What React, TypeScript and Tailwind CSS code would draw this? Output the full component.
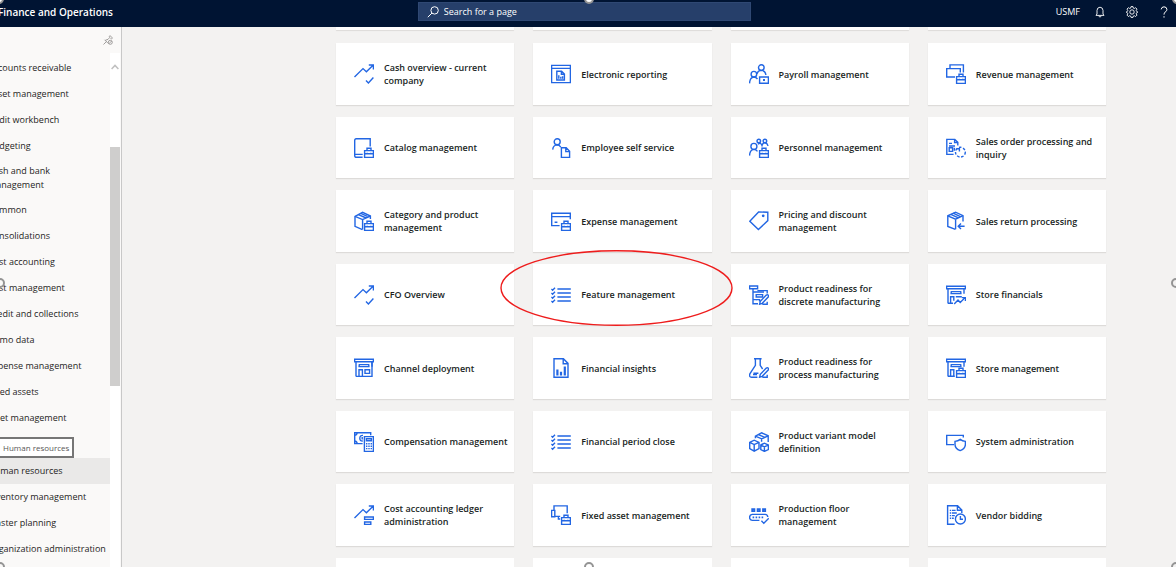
import type { ReactNode } from "react";

const NAV_ITEMS = [
  "Accounts receivable",
  "Asset management",
  "Audit workbench",
  "Budgeting",
  "Cash and bank management",
  "Common",
  "Consolidations",
  "Cost accounting",
  "Cost management",
  "Credit and collections",
  "Demo data",
  "Expense management",
  "Fixed assets",
  "Fleet management",
  "Human resources",
  "Inventory management",
  "Master planning",
  "Organization administration",
];

const ACTIVE_ITEM = "Human resources";

// Parts shared by several workspace icons, all on a 20x20 grid.

const briefcase = (
  <path d="M10.6 12.6h8.8v6.8h-8.8zM13 12.4v-2.2h4v2.2M10.6 15.8h8.8M13.2 14.8v1.8M16.8 14.8v1.8" />
);

const pencil = <path d="M10.6 19.2l.7-2.9 6-6.2q1.1-.8 1.9 0 .8.9 0 2l-6 6.2zM13.4 19.3h4.8v-2.6" />;

const trend = <path d="M.5 13L9 4.6l3.4 3.2L19.3 1M14.8 1h4.6v4.6" />;

const checklist = (
  <>
    <path d="M6.4 4h13.4M6.4 8h13.4M6.4 12h13.4M6.4 16h13.4" />
    <path d="M.4 4l1.2 1.2L4 2.8M.4 8l1.2 1.2L4 6.8M.4 12l1.2 1.2L4 10.8M.4 16l1.2 1.2L4 14.8" />
  </>
);

const storeTop = (
  <>
    <path d="M.6 1.2h18.8v2.6H.6zM2 3.8v14.6M18 3.8v5" />
    <path d="M4.4 8.6h11.2M5.2 6.2v2.4M14.8 6.2v2.4M5 6.6h10" />
  </>
);

const ICONS: Record<string, ReactNode> = {
  cash: (
    <>
      {trend}
      <path d="M12 16.6l2.4 2.4 5-5.4" />
    </>
  ),
  catalog: (
    <>
      <path d="M16.2 8.6V.8H2.2Q.7.8.7 2.4v15q0 1.9 1.9 1.9h6M.7 16.4h8" />
      {briefcase}
    </>
  ),
  category: (
    <>
      <path d="M8.4 18.6L1 15.4V5.4L8.6 1.4l7.8 3.6v3" />
      <path d="M1 5.4l7.6 3.2L16.4 5M8.6 8.6v10M4.4 3.6l7.8 3.4M6.8 2.4l6.6 3" />
      {briefcase}
    </>
  ),
  channel: (
    <>
      {storeTop}
      <path d="M18 3.8v14.6H2M5 18.2v-6.4h3.4v6.4M11 11.8h4.6v3.6H11z" />
    </>
  ),
  compensation: (
    <>
      <path d="M8.6 11.6H.7V.8h16v2.4M.7 3.4Q3 3.2 3.2.8M.7 9q2.3.2 2.5 2.6M9 3.4Q5.8 3.2 5.8 6.2T8.8 9M8.2 5v2.4" />
      <path d="M10.4 4.6h9v14.8h-9zM12.4 6.8h5v2h-5z" />
      <path strokeDasharray="1.4 .9" d="M12 11.8h6M12 14.2h6M12 16.6h6" />
    </>
  ),
  ledger: (
    <>
      {trend}
      <path d="M10.6 12h8.8v2.4h-8.8zM10.6 17h6.2v2.4h-6.2z" />
    </>
  ),
  reporting: (
    <>
      <path d="M.6 1.4h18.8v17.2H.6zM.6 4.4h18.8" />
      <path d="M5.8 7.2h4.8l2.8 2.8v6H5.8zM10.4 7.4v2.8h2.8M7.8 14.8v-3.6M9.8 14.8v-2M11.6 14.8v-2.6" />
    </>
  ),
  employee: (
    <>
      <circle cx="6.2" cy="3.8" r="3" />
      <path d="M1.7 11.6Q2.2 7 6.2 6.9q2 0 3.6 2.2" />
      <path d="M10.4 9.8h4.8l3.4 3.4v6.2h-8.2zM14.8 9.8v3.8h3.8" />
    </>
  ),
  expense: (
    <>
      <path d="M8.6 14.6H.7V2.2h18.6v6M.7 5.6h18.6M3.6 11.2h2.8" />
      {briefcase}
    </>
  ),
  checklist,
  insights: (
    <>
      <path d="M3 .7h9.4L17 5.4v13.9H3zM12.2.9v4.8H17" />
      <path strokeWidth="2.2" d="M6.4 17.4v-6M10 17.4v-3.6M13.8 17.4V8.6" />
    </>
  ),
  fixedAsset: (
    <>
      <path d="M3 5V.9h13.2v7.4M.6 5.4h3.2v6.4H.6zM3.8 11.4h5.4M7.4 11.6v2.4h1.8" />
      {briefcase}
    </>
  ),
  payroll: (
    <>
      <circle cx="12.3" cy="3.6" r="2.8" />
      <circle cx="4.9" cy="10.2" r="2.8" />
      <path d="M8 9.8q.8-3.2 4.3-3.4 4 .2 4.6 4.6M.5 19.4q.4-6 4.4-6.4 2 0 3.6 2" />
      <path d="M10.6 13h8.8v6.2h-8.8z" />
      <path strokeWidth="2" d="M14 16.1h2" />
    </>
  ),
  personnel: (
    <>
      <circle cx="4.9" cy="8.4" r="3" />
      <circle cx="9.8" cy="3" r="1.8" />
      <circle cx="15.9" cy="3" r="1.8" />
      <path d="M.5 17.6q.4-5.8 4.4-6.2 2 0 3.6 2M9 6.2q2.6-2.4 4 1.2 1.2-3.4 3.6-2.4 2 .6 2.4 3" />
      {briefcase}
    </>
  ),
  tag: (
    <>
      <path d="M.8 10.2L9.6.9l9.2.3v8.4l-9.4 9z" />
      <circle cx="14.2" cy="4.8" r=".7" />
    </>
  ),
  discrete: (
    <>
      <path d="M.6 1h8v2.8h-8zM4 3.8v15h5M4 7h11M4 14.6h4" />
      <path d="M8.4 5.6h9.8v3M7.2 9.6h6.4v2.4H7.2zM7.2 14.6h3.4v2" />
      {pencil}
    </>
  ),
  process: (
    <>
      <path d="M5 .7h7.6M6.4.9v6.5L1 15.6q-1.4 3.4 1.6 3.7h5.8M11.2.9v6.5l2.4 3.6" />
      <path d="M4.4 15.2h5M4 16.6h4" />
      {pencil}
    </>
  ),
  variant: (
    <>
      <path d="M6.4 6.2v-2L12.6.8l6.6 3V10M6.4 4.2l6.2 2.6 6.6-3M12.6 6.8v3M9.4 2.6l6.4 2.8" />
      <path d="M.7 10.4l4.5-2.2 4.8 2.2v6.2l-4.8 2.6-4.5-2.6zM.7 10.4l4.5 2.2 4.8-2.2M5.2 12.6v6.4" />
      <path d="M11.8 13l3.6-1.8 4 1.8v4.6l-4 1.8-3.6-1.8zM11.8 13l3.6 1.8 4-1.8M15.4 14.8v4.6" />
    </>
  ),
  floor: (
    <>
      <path strokeWidth="1.8" d="M3.2 4.2h2.2v2H3.2zM8.6 4.2h2.2v2H8.6zM14 4.2h2.2v2H14z" />
      <path d="M10.4 15.4H3.2q-2.6-.4-2.6-3t2.6-3h13q2.4.2 2.6 2.6" />
      <path strokeWidth="1.6" strokeDasharray="1.6 1.4" d="M3.6 12.4h12" />
      <path d="M12.4 15.8l2.4 2.4 5-5" />
    </>
  ),
  revenue: (
    <>
      <path d="M9 13H.7V4.6h13.6v3.8M4 4.4V.9h13.4v7.5" />
      {briefcase}
    </>
  ),
  salesOrder: (
    <>
      <path d="M7.6 16.4H.8v-15h8l3 3v3M8.6 1.6v3h3M3 5.4h3M3 8h6M3.2 13.4V9.8h3.4v3.6zM8.4 9.8v3" />
      <circle cx="14.4" cy="14.2" r="4.9" strokeDasharray="2.6 1.6" />
      <path d="M10.4 10.8h3v2.8" />
    </>
  ),
  salesReturn: (
    <>
      <path d="M9.4 18.4l-7.6-3V4.8l7.8-3.6L17 4.6v6" />
      <path d="M1.800 4.800l7.800 3.400L17 4.600M9.600 8.200v10M4.800 3.400l7.600 3.400M7.200 2.200l7.200 3.400M18.600 15.200h-6.400M15 12.400l-2.800 2.800 2.800 2.800" />
    </>
  ),
  storeFinancials: (
    <>
      {storeTop}
      <path d="M2 18.2h5M4.6 18.2v-6.4h3.2v4M9.800 11.800h6" />
      <path d="M8.2 19l3.8-4 2.2 2.4 5-4.8M15.8 12.6h3.6V16" />
    </>
  ),
  storeManagement: (
    <>
      {storeTop}
      <path d="M2 18.2h6.8M4.6 18.2v-6.4h3.2v6.4" />
      {briefcase}
    </>
  ),
  system: (
    <>
      <path d="M8 12.6H.7V3.4h16.6v2" />
      <path d="M14.2 7.4q2.2 1.8 5.2 2v3.2q-.2 4.200-5.200 6-5-1.800-5.200-6V9.400q3-.2 5.200-2z" />
    </>
  ),
  vendor: (
    <>
      <path d="M8.6 19.2h-7V.8h10L15.800 5v3M11.400 1v4.200h4.200" />
      <path strokeDasharray="1.2 .8 12" d="M3.800 5.400h5.800M3.800 8h7M3.800 10.600h5M3.800 13.200h4" />
      <circle cx="14.4" cy="14" r="5" />
      <path d="M14.4 11v3.200H17" />
    </>
  ),
};

interface Workspace {
  title: string;
  icon: string;
}

const WORKSPACES: Workspace[] = [
  { title: "Cash overview - current company", icon: "cash" },
  { title: "Electronic reporting", icon: "reporting" },
  { title: "Payroll management", icon: "payroll" },
  { title: "Revenue management", icon: "revenue" },
  { title: "Catalog management", icon: "catalog" },
  { title: "Employee self service", icon: "employee" },
  { title: "Personnel management", icon: "personnel" },
  { title: "Sales order processing and inquiry", icon: "salesOrder" },
  { title: "Category and product management", icon: "category" },
  { title: "Expense management", icon: "expense" },
  { title: "Pricing and discount management", icon: "tag" },
  { title: "Sales return processing", icon: "salesReturn" },
  { title: "CFO Overview", icon: "cash" },
  { title: "Feature management", icon: "checklist" },
  { title: "Product readiness for discrete manufacturing", icon: "discrete" },
  { title: "Store financials", icon: "storeFinancials" },
  { title: "Channel deployment", icon: "channel" },
  { title: "Financial insights", icon: "insights" },
  { title: "Product readiness for process manufacturing", icon: "process" },
  { title: "Store management", icon: "storeManagement" },
  { title: "Compensation management", icon: "compensation" },
  { title: "Financial period close", icon: "checklist" },
  { title: "Product variant model definition", icon: "variant" },
  { title: "System administration", icon: "system" },
  { title: "Cost accounting ledger administration", icon: "ledger" },
  { title: "Fixed asset management", icon: "fixedAsset" },
  { title: "Production floor management", icon: "floor" },
  { title: "Vendor bidding", icon: "vendor" },
];

function Header() {
  return (
    <header className="flex h-[27px] shrink-0 items-center bg-[#001433] pb-1 text-white">
      <h1 className="-ml-0.5 w-[35.7%] text-[10px] leading-4 font-semibold whitespace-nowrap">
        Finance and Operations
      </h1>
      <label className="flex h-[19px] w-[28.3%] items-center gap-1 border border-[#2f4873] bg-[#263f6a] pl-[7px]">
        <svg className="size-3.5 shrink-0" viewBox="0 0 14 14" fill="none" stroke="currentColor">
          <circle cx="8.6" cy="5.4" r="3.7" />
          <path d="M6 8l-4.200 4.200" />
        </svg>
        <input
          type="text"
          aria-label="Search for a page"
          placeholder="Search for a page"
          className="w-full bg-transparent text-[9px] leading-4 outline-none placeholder:text-white"
        />
      </label>
      <div className="ml-auto flex items-center pr-1.5">
        <button type="button" className="mr-3.5 text-[9px] leading-4">
          USMF
        </button>
        <button type="button" aria-label="Notifications" className="mr-5">
          <svg className="size-3" viewBox="0 0 12 12" fill="none" stroke="currentColor" strokeWidth=".9">
            <path d="M2 9.400h8L9 8V4.400Q8.800 1.300 6 1.200 3.200 1.300 3 4.400V8zM4.800 9.600Q5 11 6 11t1.200-1.400" />
          </svg>
        </button>
        <button type="button" aria-label="Settings" className="mr-5">
          <svg className="size-3" viewBox="0 0 12 12" fill="none" stroke="currentColor" strokeWidth=".9">
            <path d="M5 .6h2l.3 1.500 1 .4 1.300-.8L11 3.100l-.8 1.300.4 1 .9.300v.8l-.9.300-.4 1 .8 1.300-1.400 1.400-1.300-.8-1 .4-.3 1.300H5l-.3-1.300-1-.4-1.300.8L1 9.100l.8-1.300-.4-1-.9-.3v-.8l.9-.3.4-1L1 3.100l1.400-1.400 1.300.8 1-.4z" />
            <circle cx="6" cy="6" r="2.2" />
          </svg>
        </button>
        <button type="button" aria-label="Help">
          <svg className="size-3" viewBox="0 0 12 12" fill="none" stroke="currentColor">
            <path d="M3.200 3.400Q3.400.9 6 .8q2.800.1 2.900 2.600 0 1.400-1.500 2.500Q6 7 6 8.600M6 10.200v1.400" />
          </svg>
        </button>
      </div>
    </header>
  );
}

function NavItem({ label }: { label: string }) {
  const active = label === ACTIVE_ITEM;
  return (
    <li>
      {active && (
        <div className="flex h-[27px] items-end">
          <span
            role="tooltip"
            className="-ml-0.5 flex h-[21px] items-center border-2 border-[#767676] bg-white px-[3px] text-[8px] font-medium whitespace-nowrap text-[#575757]"
          >
            Human resources
          </span>
        </div>
      )}
      <a href="#" className={`flex min-h-[26px] items-center py-[5px] ${active ? "bg-[#eae9e8]" : ""}`}>
        <span className="-ml-3 text-[9px] leading-[14px] whitespace-nowrap text-[#252423]">
          {label === "Cash and bank management" ? (
            <>
              Cash and bank
              <br />
              management
            </>
          ) : (
            label
          )}
        </span>
      </a>
    </li>
  );
}

function Sidebar() {
  return (
    <aside className="flex w-[122px] shrink-0 flex-col overflow-hidden border-r border-[#c8c8c8] bg-[#faf9f8]">
      <div className="flex h-[26px] shrink-0 items-center justify-end pr-2">
        <button type="button" aria-label="Unpin navigation" className="text-[#8a8886]">
          <svg className="size-2.5" viewBox="0 0 10 10" fill="none" stroke="currentColor" strokeWidth=".8">
            <path d="M.5 9.500l2.900-2.900M1.600 4.800l3.600 3.600M2.400 5.200L5 4.400l1.600-1.800-.4-1.200.8-.8L9.500 3l-.8.8-1.200-.3" />
            <circle cx="7.300" cy="7.300" r="2" />
            <path d="M6 8.600L8.600 6" />
          </svg>
        </button>
      </div>
      <div className="flex min-h-0 flex-1">
        <nav className="min-w-0 flex-1">
          <ul className="pt-0.5">
            {NAV_ITEMS.map((item) => (
              <NavItem key={item} label={item} />
            ))}
          </ul>
        </nav>
        <div className="mr-px flex w-2.5 flex-col items-center bg-white" aria-hidden="true">
          <svg className="mt-2.5 size-2 shrink-0" viewBox="0 0 8 8" fill="none" stroke="#c0c0c0" strokeWidth="1.500">
            <path d="M.6 6L4 2.400 7.400 6" />
          </svg>
          <div className="mt-[76px] h-[239px] w-full shrink-0 bg-[#cfcecd]" />
        </div>
      </div>
    </aside>
  );
}

function Tile({ title, icon }: Workspace) {
  return (
    <a href="#" className="flex items-center gap-2.5 bg-white pr-1.5 pl-[18px] shadow-[0_1px_1px_#dddbd9]">
      <svg className="size-5 shrink-0" viewBox="0 0 20 20" fill="none" stroke="#2266e3" strokeWidth="1.4">
        {ICONS[icon]}
      </svg>
      <span className="text-[9px] leading-[13px] font-semibold text-[#201f1e]">{title}</span>
    </a>
  );
}

function Handle({ className }: { className: string }) {
  return <span className={`absolute size-2.5 rounded-full border-2 border-[#949494] ${className}`} />;
}

export default function App() {
  return (
    <div className="relative flex h-screen flex-col overflow-hidden bg-[#f3f2f1] font-['Open_Sans','Noto_Sans',sans-serif]">
      <Header />
      <div className="flex min-h-0 flex-1">
        <Sidebar />
        <main className="min-w-0 flex-1 overflow-hidden pr-[70px] pl-[214px]">
          <div className="grid auto-rows-[62px_61px] grid-cols-4 grid-rows-[4px] gap-x-[19px] gap-y-3">
            {/* Tail of the row that is scrolled under the header */}
            {[0, 1, 2, 3].map((i) => (
              <div key={i} className="h-[3px] bg-white shadow-[0_1px_1px_#dddbd9]" />
            ))}
            {WORKSPACES.map((w) => (
              <Tile key={w.title} {...w} />
            ))}
            {[0, 1, 2, 3].map((i) => (
              <div key={i} className="bg-white" />
            ))}
          </div>
        </main>
      </div>

      {/* Markup drawn over the page: highlight ring and resize handles */}
      <svg
        className="pointer-events-none absolute top-[250px] left-[500px] h-[76px] w-[233px]"
        viewBox="0 0 233 76"
        fill="none"
        stroke="#ee1c1c"
        strokeWidth="1.4"
      >
        <ellipse cx="116.500" cy="38" rx="115.500" ry="37.200" />
      </svg>
      <div className="pointer-events-none absolute inset-0">
        <Handle className="-top-1.5 -left-1.5 bg-white" />
        <Handle className="-top-1.5 left-1/2 -ml-1 bg-white" />
        <Handle className="-top-1.5 -right-1.5 bg-white" />
        <Handle className="top-1/2 -left-[5px] -mt-1.5" />
        <Handle className="top-1/2 -right-[5px] -mt-1.5" />
        <Handle className="-bottom-[5px] -left-[5px]" />
        <Handle className="-bottom-[5px] left-1/2 -ml-1" />
        <Handle className="-right-[5px] -bottom-[5px]" />
      </div>
    </div>
  );
}
